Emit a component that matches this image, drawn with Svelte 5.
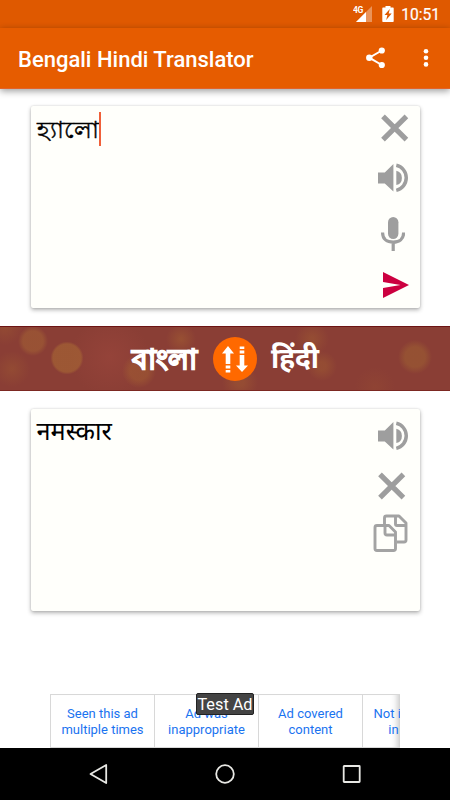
<script lang="ts">
    let source = 'হ্যালো';
    let result = 'नमस्कार';

    const adReasons = [
        ['Seen this ad', 'multiple times'],
        ['Ad was', 'inappropriate'],
        ['Ad covered', 'content'],
        ['Not interested', 'in this ad']
    ];

    const swap = () => {
        [source, result] = [result, source];
    }
</script>

{#snippet closeIcon()}
    <svg width="28" height="28" viewBox="0 0 28 28">
        <path d="M2 2.300 25.400 25.700M25.400 2.300 2 25.700" stroke="#9e9e9e" stroke-width="5.200" />
    </svg>
{/snippet}

{#snippet speakerIcon()}
    <svg width="31" height="30" viewBox="0 0 31 30" fill="#9e9e9e">
        <path d="M0 9.600H6.800L15.400 1V28.500L6.800 20.400H0Z" />
        <path d="M18.300 7.800A7.300 7.300 0 0 1 18.300 22Z" />
        <path d="M18.300 2.300A12.400 12.800 0 0 1 18.300 27.400" fill="none" stroke="#9e9e9e" stroke-width="3.500" />
    </svg>
{/snippet}

<div class="screen">
    <div class="statusBar">
        <svg class="signal" width="21" height="18" viewBox="0 0 21 18">
            <path d="M19 1V17H3Z" fill="#fff" opacity=".35" />
            <path d="M13 7V17H3Z" fill="#fff" />
            <text x="0" y="8" class="network">4G</text>
        </svg>
        <svg class="battery" width="12" height="17" viewBox="0 0 12 17">
            <path d="M3.500 0h5v1.500H11q.7 0 .7.8v13q0 .7-.7.7H1q-.7 0-.7-.7v-13q0-.8.7-.8h2.500Z" fill="#fff" />
            <path d="M7.800 3 2.500 9h2.900l-1.200 5L9.700 7.600H6.700Z" fill="#df5900" />
        </svg>
        <span class="clock">10:51</span>
    </div>
    <div class="toolbar">
        <h1>Bengali Hindi Translator</h1>
        <svg class="share" width="20" height="22" viewBox="0 0 20 22">
            <path d="M15.800 3.500 3.300 10.700 15.800 18" fill="none" stroke="#fff" stroke-width="2" />
            <circle cx="15.800" cy="3.500" r="3.100" fill="#fff" />
            <circle cx="3.300" cy="10.700" r="3.200" fill="#fff" />
            <circle cx="15.800" cy="18" r="3.100" fill="#fff" />
        </svg>
        <svg width="6" height="20" viewBox="0 0 6 20" fill="#fff">
            <circle cx="3" cy="3.200" r="2.300" />
            <circle cx="3" cy="9.800" r="2.300" />
            <circle cx="3" cy="16.400" r="2.300" />
        </svg>
    </div>

    <div class="card">
        <div class="text"><span class="bengali">{source}</span><span class="caret"></span></div>
        <div class="actions sourceActions">
            {@render closeIcon()}
            <div class="speak">{@render speakerIcon()}</div>
            <svg class="mic" width="24" height="34" viewBox="0 0 24 34">
                <rect x="7" y="0" width="10.400" height="22" rx="5.200" fill="#9e9e9e" />
                <path d="M1.600 15.500V16C1.600 21.800 6 25.200 12.200 25.200S22.600 21.800 22.600 16v-.500M12.200 25V34" fill="none" stroke="#9e9e9e" stroke-width="3.200" />
            </svg>
            <svg class="send" width="26" height="26" viewBox="0 0 26 26">
                <path d="M0 0 26 13 0 26V16L17.500 13 0 10Z" fill="#cc0040" />
            </svg>
        </div>
    </div>

    <div class="languages">
        <span class="from">বাংলা</span>
        <button aria-label="Swap languages" on:click={swap}>
            <svg width="44" height="44" viewBox="0 0 44 44" fill="#fff">
                <path d="M15 9 21 16.500H17.300V27H12.700V16.500H9ZM12.700 28.500h4.600v3h-4.600ZM12.700 33h4.600v2.500h-4.600Z" />
                <path d="M29 35 35 28.500H31.300V18H26.700V28.500H23ZM26.700 13.500h4.600v3h-4.600ZM26.700 9.500h4.600v2.500h-4.600Z" />
            </svg>
        </button>
        <span class="to">हिंदी</span>
    </div>

    <div class="card resultCard">
        <div class="text"><span class="hindi">{result}</span></div>
        <div class="actions resultActions">
            {@render speakerIcon()}
            <div class="clear">{@render closeIcon()}</div>
            <svg class="copy" width="35" height="38" viewBox="0 0 35 38" fill="none" stroke="#a3a3a3" stroke-width="2.900" stroke-linejoin="round">
                <path d="M11.500 10.500V4Q11.500 2 13.500 2H26L33 9V26Q33 28 31 28H24" />
                <path d="M22.500 2V10Q22.500 11.500 24 11.500H33" />
                <path d="M4 11.500H16L22.500 18V34.500Q22.500 36.500 20.500 36.500H4Q2 36.500 2 34.500V13.500Q2 11.500 4 11.500Z" />
                <path d="M12 11.500V19Q12 21 14 21H22.500" />
            </svg>
        </div>
    </div>

    <div class="adArea">
        <div class="ad">
            {#each adReasons as reason}
                <div class="reason">{reason[0]}<br />{reason[1]}</div>
            {/each}
        </div>
        <span class="testLabel">Test Ad</span>
    </div>

    <div class="navBar">
        <svg width="20" height="22" viewBox="0 0 20 22"><path d="M18.200 2V20L2.500 11Z" /></svg>
        <svg width="20" height="20" viewBox="0 0 20 20"><circle cx="10" cy="10" r="8.800" /></svg>
        <svg width="20" height="20" viewBox="0 0 20 20"><rect x="1.700" y="2" width="16" height="16" rx=".5" /></svg>
    </div>
</div>

<style>
    :global(body) {
        margin: 0;
        background: #fff;
    }

    .screen {
        display: flex;
        flex-direction: column;
        width: 450px;
        height: 800px;
        overflow: hidden;
        background: #fff;
        font-family: Roboto, "Noto Sans", sans-serif;
    }

    svg {
        display: block;
        flex: none;
    }

    .statusBar {
        display: flex;
        justify-content: flex-end;
        align-items: flex-start;
        box-sizing: border-box;
        height: 28px;
        padding: 5px 10px 0 0;
        background: #df5900;
        color: #fff;
    }

    .signal {
        margin-right: 8px;
    }

    .battery {
        margin-top: 1px;
        margin-right: 7px;
    }

    .network {
        font-size: 8.500px;
        font-weight: 700;
        letter-spacing: -.5px;
        fill: #fff;
    }

    .clock {
        font-size: 15.600px;
        font-weight: 400;
        line-height: 20px;
        -webkit-text-stroke: .2px #fff;
    }

    .toolbar {
        display: flex;
        align-items: center;
        box-sizing: border-box;
        height: 61px;
        padding: 0 21px 0 18px;
        flex: none;
        background: #e65c00;
        border-bottom: 1px solid #e2622a;
        box-shadow: 0 2px 7px rgba(0, 0, 0, .4);
    }

    h1 {
        flex: 1;
        margin: 2px 0 0;
        color: #fff;
        font-size: 22px;
        font-weight: 500;
        white-space: nowrap;
    }

    .share {
        margin-right: 37px;
    }

    .card {
        display: flex;
        justify-content: space-between;
        box-sizing: border-box;
        width: 389px;
        height: 202px;
        margin: 17px 0 0 30.500px;
        flex: none;
        border-radius: 2px;
        background: #fffffb;
        box-shadow: 0 2px 4px rgba(0, 0, 0, .3), 0 0 2px rgba(0, 0, 0, .15);
    }

    .resultCard {
        margin-top: 18px;
    }

    .text {
        display: flex;
        height: 34px;
        padding: 6px 0 0 6px;
        color: #000;
        line-height: 34px;
        white-space: nowrap;
    }

    .bengali {
        padding-top: 1px;
        font-size: 23.800px;
        -webkit-text-stroke: .4px #000;
    }

    .hindi {
        font-size: 25.300px;
    }

    .caret {
        width: 2px;
        height: 34px;
        background: #f0603a;
    }

    .sourceActions {
        width: 39px;
        padding: 8px 0 0 8px;
    }

    .speak {
        margin: 21px 0 0 -3px;
    }

    .mic {
        margin-top: 24px;
    }

    .send {
        margin: 21px 0 0 2px;
    }

    .resultActions {
        width: 42px;
        padding: 12px 0 0 5px;
    }

    .clear {
        margin-top: 21px;
    }

    .copy {
        margin: 14px 0 0 -5px;
    }

    .languages {
        display: flex;
        align-items: center;
        box-sizing: border-box;
        height: 65px;
        margin-top: 18px;
        padding-left: 132px;
        flex: none;
        border-top: 1px solid #6c1414;
        border-bottom: 1px solid #7c2822;
        background:
            radial-gradient(circle at 67px 31px, rgba(164, 98, 52, .7) 14px, transparent 16.500px),
            radial-gradient(circle at 33px 14px, rgba(164, 98, 52, .55) 10px, transparent 15px),
            radial-gradient(circle at 415px 30px, rgba(155, 91, 50, .65) 10px, transparent 17px),
            radial-gradient(circle at 139px 44px, rgba(160, 90, 50, .6) 9px, transparent 17px),
            radial-gradient(circle at 181px 12px, rgba(160, 90, 50, .6) 1px, transparent 15px),
            radial-gradient(circle at 312px 12px, rgba(155, 85, 50, .6) 2px, transparent 17px),
            radial-gradient(circle at 322px 39px, rgba(155, 85, 50, .6) 4px, transparent 15px),
            radial-gradient(circle at 240px 55px, rgba(160, 90, 50, .5) 4px, transparent 18px),
            radial-gradient(circle at 12px 42px, rgba(155, 85, 50, .5) 1px, transparent 18px),
            radial-gradient(circle at 5px 0, rgba(155, 85, 50, .5) 1px, transparent 18px),
            radial-gradient(circle at 375px 60px, rgba(150, 75, 50, .4) 1px, transparent 20px),
            radial-gradient(circle at 110px 30px, rgba(155, 70, 60, .6) 1px, transparent 40px),
            #8a3e35;
        color: #fff;
        font-weight: 700;
    }

    .languages span {
        font-size: 28px;
        line-height: 40px;
        white-space: nowrap;
    }

    .languages .from {
        width: 67px;
        padding-top: 2px;
        -webkit-text-stroke: 1.300px #fff;
    }

    .languages .to {
        padding-top: 1px;
    }

    button {
        width: 44px;
        height: 44px;
        margin: 1px 14px 0;
        padding: 0;
        border: 0;
        border-radius: 50%;
        background: #ff6900;
    }

    .adArea {
        position: relative;
        height: 137px;
        flex: none;
    }

    .ad {
        display: flex;
        box-sizing: border-box;
        width: 350px;
        height: 54px;
        margin: 83px 0 0 50px;
        overflow: hidden;
        border-top: 1px solid #d8d8d8;
        border-bottom: 1px solid #d8d8d8;
        box-shadow: inset -9px 0 7px -7px rgba(0, 0, 0, .25);
    }

    .reason {
        box-sizing: border-box;
        width: 104px;
        padding-top: 11px;
        flex: none;
        border-left: 1px solid #d8d8d8;
        color: #1a73f0;
        font-size: 13px;
        line-height: 15.500px;
        text-align: center;
    }

    .testLabel {
        position: absolute;
        top: 82px;
        left: 196px;
        box-sizing: border-box;
        width: 58px;
        height: 22px;
        border: 1px solid #222;
        border-radius: 2px;
        background: #444;
        color: #fff;
        font-size: 16.300px;
        line-height: 21px;
        text-align: center;
        white-space: nowrap;
    }

    .navBar {
        display: flex;
        justify-content: space-between;
        align-items: center;
        box-sizing: border-box;
        height: 52px;
        margin-top: auto;
        padding: 0 88px;
        flex: none;
        background: #000;
    }

    .navBar svg {
        fill: none;
        stroke: #e8e8e4;
        stroke-width: 1.800;
        stroke-linejoin: round;
    }
</style>
